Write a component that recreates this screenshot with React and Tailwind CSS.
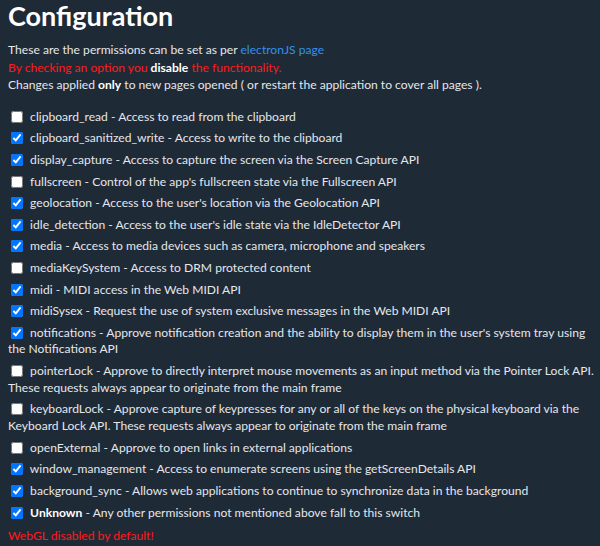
import React from 'react';

const permissions = [
    { name: 'clipboard_read', desc: 'Access to read from the clipboard', checked: false },
    { name: 'clipboard_sanitized_write', desc: 'Access to write to the clipboard', checked: true },
    { name: 'display_capture', desc: 'Access to capture the screen via the Screen Capture API', checked: true },
    { name: 'fullscreen', desc: "Control of the app's fullscreen state via the Fullscreen API", checked: false },
    { name: 'geolocation', desc: "Access to the user's location via the Geolocation API", checked: true },
    { name: 'idle_detection', desc: "Access to the user's idle state via the IdleDetector API", checked: true },
    { name: 'media', desc: 'Access to media devices such as camera, microphone and speakers', checked: true },
    { name: 'mediaKeySystem', desc: 'Access to DRM protected content', checked: false },
    { name: 'midi', desc: 'MIDI access in the Web MIDI API', checked: true },
    { name: 'midiSysex', desc: 'Request the use of system exclusive messages in the Web MIDI API', checked: true },
    { name: 'notifications', desc: "Approve notification creation and the ability to display them in the user's system tray using the Notifications API", checked: true },
    { name: 'pointerLock', desc: 'Approve to directly interpret mouse movements as an input method via the Pointer Lock API. These requests always appear to originate from the main frame', checked: false },
    { name: 'keyboardLock', desc: 'Approve capture of keypresses for any or all of the keys on the physical keyboard via the Keyboard Lock API. These requests always appear to originate from the main frame', checked: false },
    { name: 'openExternal', desc: 'Approve to open links in external applications', checked: false },
    { name: 'window_management', desc: 'Access to enumerate screens using the getScreenDetails API', checked: true },
    { name: 'background_sync', desc: 'Allows web applications to continue to synchronize data in the background', checked: true },
    { name: 'Unknown', desc: 'Any other permissions not mentioned above fall to this switch', checked: true, bold: true },
];

export default function App() {
    return (
        <div className="min-h-[546px] bg-[#1f2a37] text-[#e5e7eb] pl-2 pr-[5px] pb-2 text-[12.1px] leading-[17.5px] font-['Lato',sans-serif]">
            <h1 className="text-[27px] leading-[34px] font-bold text-white -mt-[1px]">Configuration</h1>
            <div className="mt-[8px]">
                <p>These are the permissions can be set as per <a href="#" className="text-[#3391ea]">electronJS page</a></p>
                <p className="text-[#ff1a1a]">By checking an option you <b className="text-white">disable</b> the functionality.</p>
                <p>Changes applied <b className="text-white">only</b> to new pages opened ( or restart the application to cover all pages ).</p>
            </div>
            <div className="mt-[13px]">
                {permissions.map((p) => (
                    <div key={p.name} className="py-[2.4px] leading-[16.8px]">
                        <input
                            type="checkbox"
                            defaultChecked={p.checked}
                            className="w-[12px] h-[12px] ml-[3px] mr-[4px] align-[-2px] accent-[#0075ff]"
                        />{' '}
                        <span className={p.bold ? 'font-bold text-white' : ''}>{p.name}</span> - {p.desc}
                    </div>
                ))}
            </div>
            <p className="text-[#ff1a1a] mt-[3px]">WebGL disabled by default!</p>
        </div>
    );
}
